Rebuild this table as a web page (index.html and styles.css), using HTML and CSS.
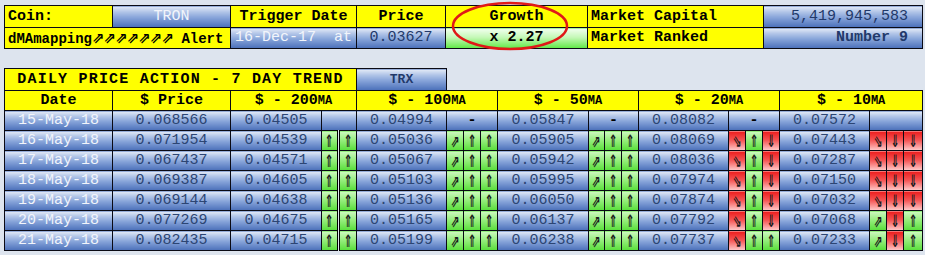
FILE: index.html
```html
<!DOCTYPE html>
<html>
<head>
<meta charset="utf-8">
<link rel="stylesheet" href="styles.css">
</head>
<body>
<div class="page">
  <table class="grid summary">
    <colgroup>
      <col style="width:108px"><col style="width:118px"><col style="width:126px"><col style="width:89px"><col style="width:142px"><col style="width:176px"><col style="width:159px">
    </colgroup>
    <tr class="r1">
      <td class="lbl">Coin:</td>
      <td class="blue light c">TRON</td>
      <td class="lbl c">Trigger Date</td>
      <td class="lbl c">Price</td>
      <td class="lbl c">Growth</td>
      <td class="lbl">Market Capital</td>
      <td class="blue navy rt">5,419,945,583</td>
    </tr>
    <tr class="r2">
      <td class="lbl alert" colspan="2">dMAmapping<span class="marr">⇗⇗⇗⇗⇗⇗⇗</span> Alert</td>
      <td class="blue light c">16-Dec-17&nbsp; at</td>
      <td class="blue navy c">0.03627</td>
      <td class="green c bold">x 2.27</td>
      <td class="lbl">Market Ranked</td>
      <td class="blue navy rt bold">Number 9</td>
    </tr>
  </table>

  <svg class="ring" width="124" height="54" viewBox="0 0 124 54">
    <ellipse cx="60" cy="26" rx="57" ry="23" fill="none" stroke="#e01818" stroke-width="2.5"/>
  </svg>

  <table class="grid trend">
    <colgroup>
      <col style="width:108px"><col style="width:118px">
      <col style="width:91px"><col style="width:17px"><col style="width:18px">
      <col style="width:90px"><col style="width:17px"><col style="width:17px"><col style="width:17px">
      <col style="width:91px"><col style="width:16px"><col style="width:17px"><col style="width:17px">
      <col style="width:90px"><col style="width:17px"><col style="width:17px"><col style="width:17px">
      <col style="width:90px"><col style="width:17px"><col style="width:17px"><col style="width:19px">
    </colgroup>
    <tr class="title">
      <td class="lbl c title-text" colspan="5">DAILY PRICE ACTION - 7 DAY TREND</td>
      <td class="blue navy c bold small">TRX</td>
      <td class="none" colspan="15"></td>
    </tr>
    <tr class="head">
      <td class="lbl c">Date</td>
      <td class="lbl c">$ Price</td>
      <td class="lbl c" colspan="3">$ - 200<span class="ma">MA</span></td>
      <td class="lbl c" colspan="4">$ - 100<span class="ma">MA</span></td>
      <td class="lbl c" colspan="4">$ - 50<span class="ma">MA</span></td>
      <td class="lbl c" colspan="4">$ - 20<span class="ma">MA</span></td>
      <td class="lbl c" colspan="4">$ - 10<span class="ma">MA</span></td>
    </tr>
    <tr>
      <td class="blue light c">15-May-18</td>
      <td class="blue val">0.068566</td>
      <td class="blue val">0.04505</td><td class="blue" colspan="2"></td>
      <td class="blue val">0.04994</td><td class="blue dash" colspan="3">-</td>
      <td class="blue val">0.05847</td><td class="blue dash" colspan="3">-</td>
      <td class="blue val">0.08082</td><td class="blue dash" colspan="3">-</td>
      <td class="blue val">0.07572</td><td class="blue" colspan="3"></td>
    </tr>
    <tr>
      <td class="blue light c">16-May-18</td>
      <td class="blue val">0.071954</td>
      <td class="blue val">0.04539</td><td class="g"><i>⇑</i></td><td class="g dbl"><i>⇑</i></td>
      <td class="blue val">0.05036</td><td class="g"><i>⇗</i></td><td class="g"><i>⇑</i></td><td class="g"><i>⇑</i></td>
      <td class="blue val">0.05905</td><td class="g"><i>⇗</i></td><td class="g"><i>⇑</i></td><td class="g"><i>⇑</i></td>
      <td class="blue val">0.08069</td><td class="rd"><i>⇘</i></td><td class="g"><i>⇑</i></td><td class="rd"><i>⇓</i></td>
      <td class="blue val">0.07443</td><td class="rd"><i>⇘</i></td><td class="rd"><i>⇓</i></td><td class="rd"><i>⇓</i></td>
    </tr>
    <tr>
      <td class="blue light c">17-May-18</td>
      <td class="blue val">0.067437</td>
      <td class="blue val">0.04571</td><td class="g"><i>⇑</i></td><td class="g dbl"><i>⇑</i></td>
      <td class="blue val">0.05067</td><td class="g"><i>⇗</i></td><td class="g"><i>⇑</i></td><td class="g"><i>⇑</i></td>
      <td class="blue val">0.05942</td><td class="g"><i>⇗</i></td><td class="g"><i>⇑</i></td><td class="g"><i>⇑</i></td>
      <td class="blue val">0.08036</td><td class="rd"><i>⇘</i></td><td class="g"><i>⇑</i></td><td class="rd"><i>⇓</i></td>
      <td class="blue val">0.07287</td><td class="rd"><i>⇘</i></td><td class="rd"><i>⇓</i></td><td class="rd"><i>⇓</i></td>
    </tr>
    <tr>
      <td class="blue light c">18-May-18</td>
      <td class="blue val">0.069387</td>
      <td class="blue val">0.04605</td><td class="g"><i>⇑</i></td><td class="g dbl"><i>⇑</i></td>
      <td class="blue val">0.05103</td><td class="g"><i>⇗</i></td><td class="g"><i>⇑</i></td><td class="g"><i>⇑</i></td>
      <td class="blue val">0.05995</td><td class="g"><i>⇗</i></td><td class="g"><i>⇑</i></td><td class="g"><i>⇑</i></td>
      <td class="blue val">0.07974</td><td class="rd"><i>⇘</i></td><td class="g"><i>⇑</i></td><td class="rd"><i>⇓</i></td>
      <td class="blue val">0.07150</td><td class="rd"><i>⇘</i></td><td class="rd"><i>⇓</i></td><td class="rd"><i>⇓</i></td>
    </tr>
    <tr>
      <td class="blue light c">19-May-18</td>
      <td class="blue val">0.069144</td>
      <td class="blue val">0.04638</td><td class="g"><i>⇑</i></td><td class="g dbl"><i>⇑</i></td>
      <td class="blue val">0.05136</td><td class="g"><i>⇗</i></td><td class="g"><i>⇑</i></td><td class="g"><i>⇑</i></td>
      <td class="blue val">0.06050</td><td class="g"><i>⇗</i></td><td class="g"><i>⇑</i></td><td class="g"><i>⇑</i></td>
      <td class="blue val">0.07874</td><td class="rd"><i>⇘</i></td><td class="g"><i>⇑</i></td><td class="rd"><i>⇓</i></td>
      <td class="blue val">0.07032</td><td class="rd"><i>⇘</i></td><td class="rd"><i>⇓</i></td><td class="rd"><i>⇓</i></td>
    </tr>
    <tr>
      <td class="blue light c">20-May-18</td>
      <td class="blue val">0.077269</td>
      <td class="blue val">0.04675</td><td class="g"><i>⇑</i></td><td class="g dbl"><i>⇑</i></td>
      <td class="blue val">0.05165</td><td class="g"><i>⇗</i></td><td class="g"><i>⇑</i></td><td class="g"><i>⇑</i></td>
      <td class="blue val">0.06137</td><td class="g"><i>⇗</i></td><td class="g"><i>⇑</i></td><td class="g"><i>⇑</i></td>
      <td class="blue val">0.07792</td><td class="rd"><i>⇘</i></td><td class="g"><i>⇑</i></td><td class="rd"><i>⇓</i></td>
      <td class="blue val">0.07068</td><td class="g"><i>⇗</i></td><td class="rd"><i>⇓</i></td><td class="g"><i>⇑</i></td>
    </tr>
    <tr>
      <td class="blue light c">21-May-18</td>
      <td class="blue val">0.082435</td>
      <td class="blue val">0.04715</td><td class="g"><i>⇑</i></td><td class="g dbl"><i>⇑</i></td>
      <td class="blue val">0.05199</td><td class="g"><i>⇗</i></td><td class="g"><i>⇑</i></td><td class="g"><i>⇑</i></td>
      <td class="blue val">0.06238</td><td class="g"><i>⇗</i></td><td class="g"><i>⇑</i></td><td class="g"><i>⇑</i></td>
      <td class="blue val">0.07737</td><td class="rd"><i>⇘</i></td><td class="g"><i>⇑</i></td><td class="g"><i>⇑</i></td>
      <td class="blue val">0.07233</td><td class="g"><i>⇗</i></td><td class="rd"><i>⇓</i></td><td class="g"><i>⇑</i></td>
    </tr>
  </table>
</div>
</body>
</html>
```

FILE: styles.css
```css
html, body {
  margin: 0;
  padding: 0;
  background: #dde4ee;
}

.page {
  position: relative;
  padding: 5px 3px 0 4px;
  font-family: "Liberation Mono", "Courier New", monospace;
  font-size: 15px;
  color: #000;
}

.grid {
  border-collapse: collapse;
  table-layout: fixed;
  width: 918px;
}

.grid td {
  border: 1px solid #0a0a14;
  padding: 0 3px;
  white-space: nowrap;
  overflow: hidden;
  line-height: 18px;
}

.summary .r1 td { height: 21px; }
.summary .r2 td { height: 20px; }

.trend {
  margin-top: 19px;
}

.trend .title td { height: 21px; }
.trend tr td { height: 19px; }

.lbl {
  background: #ffff00;
  font-weight: bold;
  color: #000;
}

.alert {
  font-size: 14px;
}

.c { text-align: center; }
.rt { text-align: right; padding-right: 14px !important; }
.bold { font-weight: bold; }
.small { font-size: 13px; }

.title-text {
  letter-spacing: 1.2px;
}

.ma {
  font-size: 12px;
}

.blue {
  background: linear-gradient(to bottom, #e4ebf7 0%, #b3c6e8 25%, #88a5da 52%, #4a6fb9 100%);
}

.light {
  color: #f2f5fb;
}

.navy {
  color: #22396a;
}

.val {
  text-align: center;
  color: #2c4573;
}

.dash {
  text-align: center;
  color: #000;
  font-weight: bold;
}

.green {
  background: linear-gradient(to bottom, #f2fff0 0%, #c4f8b6 45%, #5fe845 100%);
  color: #000;
}

.trend td.g,
.trend td.rd {
  padding: 0;
  text-align: center;
  font-family: "DejaVu Sans", sans-serif;
  font-weight: bold;
  font-size: 17px;
  line-height: 18px;
  color: #1a1a1a;
}

.trend td.g i,
.trend td.rd i {
  display: inline-block;
  font-style: normal;
  transform: scaleX(0.62);
}

.g {
  background: linear-gradient(to bottom, #cdf9c0 0%, #97ee7e 45%, #58de3a 100%);
}

.rd {
  background: linear-gradient(to bottom, #ec1e1e 0%, #f45252 45%, #ffcccc 100%);
}

.trend td.dbl {
  border-left: 3px double #000;
}

.none {
  border: none !important;
  background: transparent;
}

.marr {
  font-family: "DejaVu Sans", sans-serif;
  font-size: 15px;
  font-weight: bold;
  letter-spacing: -1px;
}

.ring {
  position: absolute;
  left: 450px;
  top: 0;
}
```
